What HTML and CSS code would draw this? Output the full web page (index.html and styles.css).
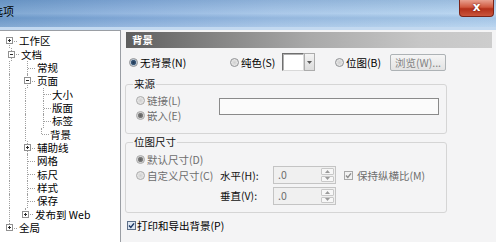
FILE: index.html
```html
<!DOCTYPE html>
<html>
<head>
<meta charset="utf-8">
<title>选项</title>
<link rel="stylesheet" href="styles.css">
</head>
<body>
<div class="win">
  <div class="titlebar">
    <span class="title">选项</span>
    <div class="close">x</div>
  </div>
  <div class="main">
    <div class="tree">
      <div class="row"><i class="c f"><b class="x p"></b></i><span class="t">工作区</span></div>
      <div class="row"><i class="c t"><b class="x"></b></i><span class="t">文档</span></div>
      <div class="row"><i class="c v"></i><i class="c t"></i><span class="t">常规</span></div>
      <div class="row"><i class="c v"></i><i class="c t"><b class="x"></b></i><span class="t">页面</span></div>
      <div class="row"><i class="c v"></i><i class="c v"></i><i class="c t"></i><span class="t t2">大小</span></div>
      <div class="row"><i class="c v"></i><i class="c v"></i><i class="c t"></i><span class="t t2">版面</span></div>
      <div class="row"><i class="c v"></i><i class="c v"></i><i class="c t"></i><span class="t t2">标签</span></div>
      <div class="row"><i class="c v"></i><i class="c v"></i><i class="c l"></i><span class="t t2">背景</span></div>
      <div class="row"><i class="c v"></i><i class="c t"><b class="x p"></b></i><span class="t">辅助线</span></div>
      <div class="row"><i class="c v"></i><i class="c t"></i><span class="t">网格</span></div>
      <div class="row"><i class="c v"></i><i class="c t"></i><span class="t">标尺</span></div>
      <div class="row"><i class="c v"></i><i class="c t"></i><span class="t">样式</span></div>
      <div class="row"><i class="c v"></i><i class="c t"></i><span class="t">保存</span></div>
      <div class="row"><i class="c v"></i><i class="c l"><b class="x p"></b></i><span class="t">发布到 Web</span></div>
      <div class="row"><i class="c l"><b class="x p"></b></i><span class="t">全局</span></div>
    </div>

    <div class="panel">
      <div class="hdr">背景</div>

      <div class="bgrow">
        <label class="opt o1"><span class="radio on"></span>无背景(N)</label>
        <label class="opt o2"><span class="radio"></span>纯色(S)</label>
        <div class="color">
          <span class="sw"></span>
          <span class="dd"><svg width="5" height="3" viewBox="0 0 5 3"><path d="M0 0H5L2.5 3Z" fill="#5a5a5a"/></svg></span>
        </div>
        <label class="opt o3"><span class="radio"></span>位图(B)</label>
        <div class="btn">浏览(W)...</div>
      </div>

      <div class="group g1">
        <div class="legend">来源</div>
        <div class="g1body">
          <div class="col">
            <label class="opt dis"><span class="radio dis"></span>链接(L)</label>
            <label class="opt dis"><span class="radio on dis"></span>嵌入(E)</label>
          </div>
          <div class="path"></div>
        </div>
      </div>

      <div class="group g2">
        <div class="legend">位图尺寸</div>
        <div class="g2body">
          <label class="opt dis ra"><span class="radio on dis"></span>默认尺寸(D)</label>
          <label class="opt dis rb1"><span class="radio dis"></span>自定义尺寸(C)</label>
          <span class="lbl rb2">水平(H):</span>
          <div class="spin rb3">
            <span class="v">.0</span>
            <span class="btns">
              <span class="sb"><svg width="5" height="3" viewBox="0 0 5 3"><path d="M0 3H5L2.5 0Z" fill="#9a9a9a"/></svg></span>
              <span class="sb"><svg width="5" height="3" viewBox="0 0 5 3"><path d="M0 0H5L2.5 3Z" fill="#9a9a9a"/></svg></span>
            </span>
          </div>
          <label class="opt dis rb4"><svg class="check" width="9" height="9" viewBox="0 0 9 9"><rect x="0.5" y="0.5" width="8" height="8" fill="#f2f2f2" stroke="#a8a8a8"/><path d="M2 4.5L3.8 6.4L7 2.4" fill="none" stroke="#8c8c8c" stroke-width="1.4"/></svg>保持纵横比(M)</label>
          <span class="lbl rc2">垂直(V):</span>
          <div class="spin rc3">
            <span class="v">.0</span>
            <span class="btns">
              <span class="sb"><svg width="5" height="3" viewBox="0 0 5 3"><path d="M0 3H5L2.5 0Z" fill="#9a9a9a"/></svg></span>
              <span class="sb"><svg width="5" height="3" viewBox="0 0 5 3"><path d="M0 0H5L2.5 3Z" fill="#9a9a9a"/></svg></span>
            </span>
          </div>
        </div>
      </div>

      <label class="opt pr"><svg class="check" width="9" height="9" viewBox="0 0 9 9"><rect x="0.5" y="0.5" width="8" height="8" fill="#dce6f2" stroke="#5d6f88"/><path d="M2 4.5L3.8 6.4L7 2.4" fill="none" stroke="#1c3664" stroke-width="1.5"/></svg>打印和导出背景(P)</label>
    </div>
  </div>
</div>
</body>
</html>
```

FILE: styles.css
```css
* { box-sizing: border-box; margin: 0; padding: 0; }

html, body {
  width: 496px;
  height: 242px;
  overflow: hidden;
}

body {
  font-family: "Noto Sans CJK SC", "Liberation Sans", sans-serif;
  font-size: 10.5px;
  color: #000;
  background: #f4f4f5;
}

.win {
  display: flex;
  flex-direction: column;
  height: 242px;
}

.titlebar {
  height: 30px;
  flex: none;
  display: flex;
  align-items: flex-start;
  justify-content: space-between;
  background:
    linear-gradient(to bottom, rgba(0,0,0,0) 0 27px, #c3d9f0 27px),
    linear-gradient(to bottom, rgba(60,100,150,0.18) 0, rgba(255,255,255,0.12) 45%, rgba(80,120,170,0.15) 60%, rgba(255,255,255,0.2) 100%),
    linear-gradient(90deg, #6f9ccc 0%, #86addb 25%, #9fc1e6 55%, #aacbeb 80%, #b3d2f0 100%);
}

.title {
  margin-left: -8px;
  margin-top: 4px;
  font-size: 11px;
  line-height: 14px;
  color: #000;
}

.close {
  width: 35px;
  height: 17px;
  margin-right: 2px;
  border: 1px solid #7a2318;
  border-top: none;
  border-radius: 0 0 4px 4px;
  background: linear-gradient(to bottom, #e8a08f 0%, #d0583f 45%, #b3301a 55%, #c9553c 100%);
  color: #fff;
  font: bold 12px/15px "DejaVu Sans", sans-serif;
  text-align: center;
  text-shadow: 0 0 2px #5a0f08;
}

.main {
  flex: 1;
  display: flex;
  min-height: 0;
}

/* tree */
.tree {
  width: 121px;
  flex: none;
  background: #fff;
  border-top: 1px solid #9a9ea4;
  border-right: 1px solid #9a9ea4;
  padding: 3.3px 0 0 1px;
}

.row {
  height: 13.33px;
  display: flex;
  align-items: center;
}

.c {
  position: relative;
  width: 16px;
  flex: none;
  align-self: stretch;
}

.c::before,
.c::after {
  content: "";
  position: absolute;
}

.c.v::before,
.c.t::before {
  left: 8px;
  top: 0;
  bottom: 0;
  border-left: 1px dotted #a0a0a0;
}

.c.l::before {
  left: 8px;
  top: 0;
  height: 50%;
  border-left: 1px dotted #a0a0a0;
}

.c.f::before {
  left: 8px;
  top: 50%;
  bottom: 0;
  border-left: 1px dotted #a0a0a0;
}

.c.t::after,
.c.l::after,
.c.f::after {
  left: 9px;
  right: 0;
  top: 50%;
  border-top: 1px dotted #a0a0a0;
}

.x {
  position: absolute;
  z-index: 1;
  left: 5px;
  top: calc(50% - 3.5px);
  width: 7px;
  height: 7px;
  border: 1px solid #919191;
  background: #fff;
}

.x::before {
  content: "";
  position: absolute;
  left: 1px;
  top: 2px;
  width: 3px;
  height: 1px;
  background: #2a2a2a;
}

.x.p::after {
  content: "";
  position: absolute;
  left: 2px;
  top: 1px;
  width: 1px;
  height: 3px;
  background: #2a2a2a;
}

.t {
  margin-left: 2px;
  line-height: 13px;
  white-space: nowrap;
  font-size: 10.5px;
}

.t2 { margin-left: 1px; }

/* panel */
.panel {
  flex: 1;
  display: flex;
  flex-direction: column;
  align-items: flex-start;
  padding-left: 4px;
}

.hdr {
  margin: 2px 0 0 1px;
  width: 366px;
  height: 16px;
  padding-left: 6px;
  line-height: 16px;
  color: #fff;
  font-weight: bold;
  font-size: 10.5px;
  background: linear-gradient(90deg, #5e5e5e 0%, #7d7d7d 20%, #a9a9a9 50%, #c6c6c6 80%, #cdcdcd 100%);
}

.opt {
  display: inline-flex;
  align-items: center;
  white-space: nowrap;
  height: 15px;
}

.opt.dis { color: #6d6d6d; }

.radio {
  display: inline-block;
  flex: none;
  width: 9px;
  height: 9px;
  margin-right: 2px;
  border-radius: 50%;
  border: 1px solid #8f9194;
  background: radial-gradient(circle at 50% 50%, #cfcfcf 0, #e2e2e2 55%, #f6f6f6 100%);
}

.radio.on {
  background: radial-gradient(circle at 50% 50%, #1f3550 0, #3a5878 2.2px, #b9c6d3 3px, #f2f2f2 100%);
}

.radio.on.dis {
  background: radial-gradient(circle at 50% 50%, #5e5e5e 0, #7e7e7e 2.2px, #d2d2d2 3px, #f2f2f2 100%);
}

.radio.dis { border-color: #a9a9a9; }

.check {
  flex: none;
  margin-right: 1px;
  display: block;
}

.bgrow {
  display: flex;
  align-items: center;
  height: 18px;
  margin-top: 5px;
  padding-left: 4px;
}

.o1 { width: 101px; }
.o2 { width: 52px; }
.o3 { width: 55px; margin-left: 20px; }

.color {
  display: flex;
  height: 18px;
  width: 33px;
}

.sw {
  width: 22px;
  height: 18px;
  border: 1px solid;
  border-color: #6f6f6f #d9d9d9 #d9d9d9 #6f6f6f;
  box-shadow: inset 1px 1px 0 #b0b0b0;
  background: #fff;
}

.dd {
  width: 11px;
  height: 18px;
  border: 1px solid #acacac;
  background: linear-gradient(to bottom, #f3f3f3, #dcdcdc);
  display: flex;
  align-items: center;
  justify-content: center;
}

.dd svg { display: block; }

.btn {
  width: 56px;
  height: 17px;
  border: 1px solid #adb2b5;
  border-radius: 2px;
  background: linear-gradient(to bottom, #f5f5f5, #e3e3e3);
  color: #838383;
  text-align: center;
  line-height: 15px;
}

.group {
  width: 322px;
  border: 1px solid #d5d5d5;
  border-radius: 3px;
  padding: 0 8px 0 10px;
}

.legend {
  width: fit-content;
  margin: -7px 0 0 -3px;
  padding: 0 1px;
  line-height: 12px;
  background: #f4f4f5;
  color: #111;
}

.g1 {
  margin-top: 13px;
  padding-bottom: 10px;
}

.g1body {
  display: grid;
  grid-template-columns: 83px 220px;
  margin-top: 2.5px;
}

.col {
  display: flex;
  flex-direction: column;
}

.path {
  width: 220px;
  height: 17px;
  margin-top: 5.5px;
  border: 1px solid #8a8a8a;
  background: #fbfbfb;
}

.g2 {
  margin-top: 8px;
  padding-bottom: 6.5px;
}

.g2body {
  display: grid;
  grid-template-columns: 84px 53px 63px auto;
  grid-template-rows: 14px 18px 21px;
  margin-top: 4.5px;
  align-items: center;
}

.ra { grid-column: 1; grid-row: 1; }
.rb1 { grid-column: 1; grid-row: 2; }
.rb2 { grid-column: 2; grid-row: 2; }
.rb3 { grid-column: 3; grid-row: 2; }
.rb4 { grid-column: 4; grid-row: 2; margin-left: 8px; }
.rc2 { grid-column: 2; grid-row: 3; align-self: end; line-height: 18px; }
.rc3 { grid-column: 3; grid-row: 3; align-self: end; }

.rb4 .check { margin-right: 4px; }

.lbl {
  white-space: nowrap;
  color: #111;
}

.spin {
  display: flex;
  width: 63px;
  height: 18px;
  border: 1px solid #c4c4c4;
  background: #f0f0f0;
}

.spin .v {
  flex: 1;
  padding-left: 4px;
  line-height: 16px;
  color: #6d6d6d;
}

.spin .btns {
  width: 15px;
  display: flex;
  flex-direction: column;
  gap: 1px;
  padding: 1px;
}

.sb {
  flex: 1;
  border: 1px solid #c8c8c8;
  border-radius: 1px;
  background: #f7f7f7;
  display: flex;
  align-items: center;
  justify-content: center;
}

.sb svg { display: block; }

.pr {
  margin-top: 6px;
  margin-left: 2px;
  height: 14px;
}

.pr .check { margin-right: 1px; }
```
